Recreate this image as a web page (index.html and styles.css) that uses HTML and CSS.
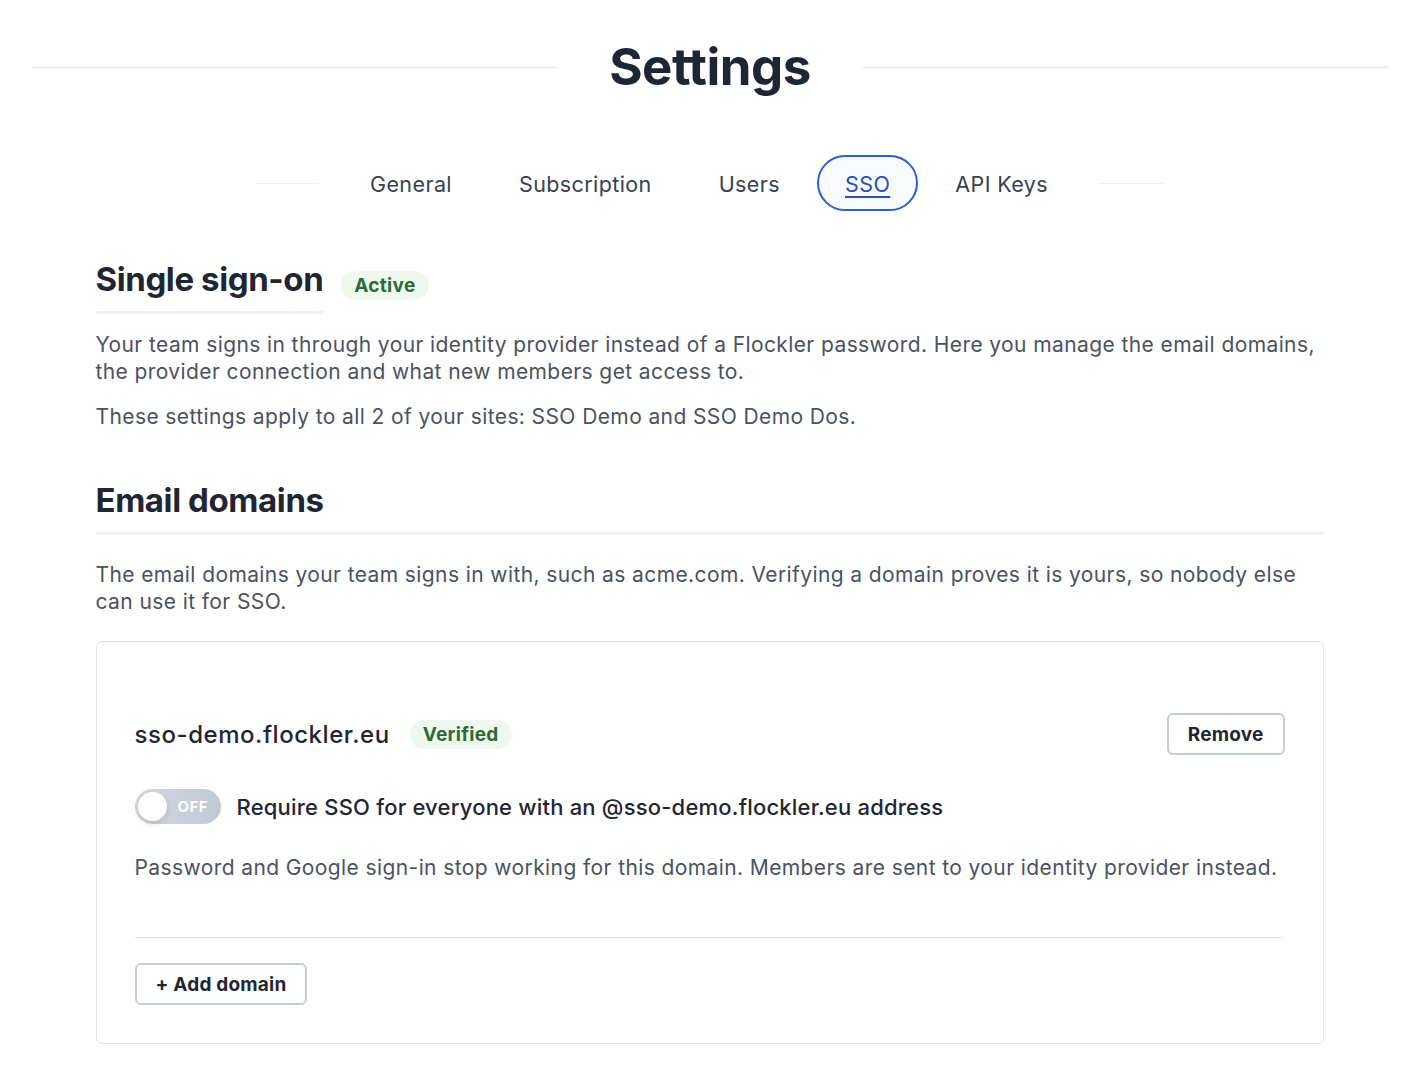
FILE: index.html
```html
<!DOCTYPE html>
<html lang="en">
<head>
    <meta charset="UTF-8">
    <meta name="viewport" content="width=device-width, initial-scale=1.0">
    <title>Settings - SSO</title>
    <link rel="stylesheet" href="styles.css">
</head>
<body>
    <header class="page-title">
        <span class="rule"></span>
        <h1>Settings</h1>
        <span class="rule"></span>
    </header>

    <nav class="tabs">
        <span class="tab-rule"></span>
        <a class="tab" href="#">General</a>
        <a class="tab" href="#">Subscription</a>
        <a class="tab" href="#">Users</a>
        <a class="tab active" href="#">SSO</a>
        <a class="tab" href="#">API Keys</a>
        <span class="tab-rule"></span>
    </nav>

    <main class="content">
        <div class="section-head">
            <h2 class="underlined">Single sign-on</h2>
            <span class="badge">Active</span>
        </div>
        <p class="lead">Your team signs in through your identity provider instead of a Flockler password. Here you manage the email domains, the provider connection and what new members get access to.</p>
        <p class="lead">These settings apply to all 2 of your sites: SSO Demo and SSO Demo Dos.</p>

        <h2 class="full-rule">Email domains</h2>
        <p class="lead">The email domains your team signs in with, such as acme.com. Verifying a domain proves it is yours, so nobody else can use it for SSO.</p>

        <div class="card">
            <div class="domain-row">
                <span class="domain-name">sso-demo.flockler.eu</span>
                <span class="badge">Verified</span>
                <button class="btn btn-right">Remove</button>
            </div>
            <label class="toggle-row">
                <span class="toggle"><span class="knob"></span><span class="toggle-text">OFF</span></span>
                <span class="toggle-label">Require SSO for everyone with an @sso-demo.flockler.eu address</span>
            </label>
            <p class="hint">Password and Google sign-in stop working for this domain. Members are sent to your identity provider instead.</p>
            <div class="card-foot">
                <button class="btn">+ Add domain</button>
            </div>
        </div>
    </main>
</body>
</html>
```

FILE: styles.css
```css
body { margin: 0; font-family: Inter, "Noto Sans", sans-serif; color: #1f2633; background: #fff; }

.page-title { display: flex; align-items: center; padding: 36px 30px 0 32px; }
.page-title .rule { flex: 1; height: 3px; background: #f1f1f5; }
.page-title h1 { margin: 0 52px; font-size: 51px; font-weight: 700; letter-spacing: -0.5px; line-height: 62px; }

.tabs { display: flex; align-items: center; justify-content: center; gap: 7px; margin-top: 57px; }
.tab-rule { width: 64px; height: 1px; background: #f0f0f3; margin: 0 14px; }
.tab { display: block; padding: 0 28px; height: 56px; line-height: 54px; font-size: 21.5px; letter-spacing: 0.4px; color: #374151; text-decoration: none; border: 2px solid transparent; border-radius: 28px; box-sizing: border-box; }
.tab.active { border-color: #2d5fd0; background: #f8fafd; color: #2a4fb5; text-decoration: underline; text-underline-offset: 4px; text-decoration-thickness: 2px; padding: 0 26px; }

.content { width: 1228px; margin: 0 auto; padding: 48px 0 0 1px; box-sizing: content-box; }

h2 { margin: 0; font-size: 33px; font-weight: 700; letter-spacing: -0.4px; color: #1f2633; }
.section-head { display: flex; align-items: center; gap: 18px; }
.underlined { padding-bottom: 12px; border-bottom: 3px solid #f1f1f5; }
.section-head .badge { margin-bottom: 2px; }
.full-rule { margin-top: 50px; padding-bottom: 12px; border-bottom: 3px solid #f1f1f5; }

.badge { display: inline-block; padding: 0 13px; height: 29px; line-height: 29px; border-radius: 15px; background: #eef8ef; color: #2b6a35; font-weight: 700; font-size: 19px; letter-spacing: 0.3px; }

.lead { margin: 18px 0 0; font-size: 21px; line-height: 27px; letter-spacing: 0.4px; color: #4a5262; }
.section-head + .lead { margin-top: 17px; }
.full-rule + .lead { margin-top: 26px; }

.card { margin-top: 26px; border: 1px solid #e4e6ea; border-radius: 6px; padding: 71px 38px 38px; }
.domain-row { display: flex; align-items: center; gap: 20px; }
.domain-name { font-size: 24px; font-weight: 500; letter-spacing: 0.55px; color: #1f2633; }
.btn { font-family: inherit; font-size: 19px; font-weight: 700; letter-spacing: 0.2px; color: #1f2633; background: #fff; border: 2px solid #c6cbd8; border-radius: 6px; height: 42px; padding: 0 19px; cursor: pointer; }
.btn-right { margin-left: auto; }

.toggle-row { display: flex; align-items: center; gap: 16px; margin-top: 34px; }
.toggle { position: relative; display: block; width: 86px; height: 35px; border-radius: 18px; background: linear-gradient(90deg, #d3d7e1, #c3c8d5); }
.knob { position: absolute; left: 3px; top: 3px; width: 29px; height: 29px; border-radius: 50%; background: #fff; box-shadow: 0 3px 6px rgba(0,0,0,0.12); }
.toggle-text { position: absolute; left: 43px; top: 0; line-height: 35px; font-size: 15px; font-weight: 700; color: #fff; letter-spacing: 0.5px; }
.toggle-label { font-size: 22px; font-weight: 500; letter-spacing: 0.2px; color: #1f2633; }

.hint { margin: 30px 0 0; font-size: 21px; line-height: 27px; letter-spacing: 0.4px; color: #4a5262; }

.card-foot { margin-top: 56px; padding-top: 25px; border-top: 1px solid #e4e6ea; }
```
